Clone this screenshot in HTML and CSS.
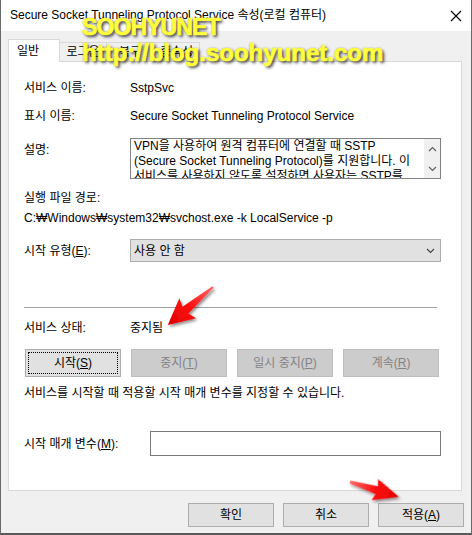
FILE: index.html
```html
<!DOCTYPE html>
<html lang="ko">
<head>
<meta charset="utf-8">
<link rel="stylesheet" href="styles.css">
</head>
<body>
<div class="window">
  <div class="titlebar">
    <span class="title">Secure Socket Tunneling Protocol Service 속성(로컬 컴퓨터)</span>
    <svg class="close" width="12" height="12" viewBox="0 0 12 12"><path d="M1 1 L11 11 M11 1 L1 11" stroke="#000" stroke-width="1.1" fill="none"/></svg>
  </div>
  <div class="client">
    <div class="tabs">
      <div class="tab active">일반</div>
      <div class="tab t2">로그온</div>
      <div class="tab t3">복구</div>
      <div class="tab t4">종속성</div>
    </div>
    <div class="panel">
      <div class="row r1"><span class="label">서비스 이름:</span><span>SstpSvc</span></div>
      <div class="row r2"><span class="label">표시 이름:</span><span>Secure Socket Tunneling Protocol Service</span></div>
      <div class="row r3">
        <span class="label desc-label">설명:</span>
        <div class="textarea">
          <div class="ta-text">VPN을 사용하여 원격 컴퓨터에 연결할 때 SSTP<br>(Secure Socket Tunneling Protocol)를 지원합니다. 이<br>서비스를 사용하지 않도록 설정하면 사용자는 SSTP를</div>
          <div class="scroll">
            <svg width="9" height="6" viewBox="0 0 9 6"><path d="M1 5 L4.5 1.5 L8 5" stroke="#606060" stroke-width="1.2" fill="none"/></svg>
            <svg width="9" height="6" viewBox="0 0 9 6"><path d="M1 1 L4.5 4.5 L8 1" stroke="#606060" stroke-width="1.2" fill="none"/></svg>
          </div>
        </div>
      </div>
      <div class="line r4">실행 파일 경로:</div>
      <div class="line r5">C:₩Windows₩system32₩svchost.exe -k LocalService -p</div>
      <div class="row r6">
        <span class="label">시작 유형(<u>E</u>):</span>
        <div class="select"><span>사용 안 함</span>
          <svg width="9" height="6" viewBox="0 0 9 6"><path d="M1 1 L4.5 4.5 L8 1" stroke="#404040" stroke-width="1.1" fill="none"/></svg>
        </div>
      </div>
      <div class="sep"></div>
      <div class="row r7"><span class="label">서비스 상태:</span><span>중지됨</span></div>
      <div class="btnrow">
        <div class="btn focus"><span class="focusring">시작(<u>S</u>)</span></div>
        <div class="btn disabled">중지(<u>T</u>)</div>
        <div class="btn disabled">일시 중지(<u>P</u>)</div>
        <div class="btn disabled">계속(<u>R</u>)</div>
      </div>
      <div class="line r8">서비스를 시작할 때 적용할 시작 매개 변수를 지정할 수 있습니다.</div>
      <div class="row r9">
        <span class="label wide">시작 매개 변수(<u>M</u>):</span>
        <div class="input"></div>
      </div>
    </div>
    <div class="footer">
      <div class="btn fbtn">확인</div>
      <div class="btn fbtn">취소</div>
      <div class="btn fbtn">적용(<u>A</u>)</div>
    </div>
  </div>

  <div class="watermark">
    <div class="wm1">SOOHYUNET</div>
    <div class="wm2">http://blog.soohyunet.com</div>
  </div>

  <svg class="arrows" width="472" height="535" viewBox="0 0 472 535">
    <defs>
      <linearGradient id="rg" x1="0" y1="0" x2="1" y2="0">
        <stop offset="0" stop-color="#ff6a6a"/>
        <stop offset="0.5" stop-color="#ff1010"/>
        <stop offset="1" stop-color="#e00000"/>
      </linearGradient>
      <filter id="sh" x="-30%" y="-30%" width="160%" height="160%">
        <feDropShadow dx="1.5" dy="2" stdDeviation="1.5" flood-color="#000" flood-opacity="0.45"/>
      </filter>
    </defs>
    <g filter="url(#sh)">
      <polygon transform="translate(213,287) rotate(140)" points="0,-1 36,-4.5 33,-13 59,0 33,13 36,4.5 0,1" fill="url(#rg)"/>
      <polygon transform="translate(350,482) rotate(17)" points="0,-1.5 28,-4 26,-11 51,0 26,11 28,4 0,1.5" fill="url(#rg)"/>
    </g>
  </svg>
</div>
</body>
</html>
```

FILE: styles.css
```css
* { box-sizing: border-box; }
html, body { margin: 0; padding: 0; }
body {
  background: #5b5f5a;
  font-family: "Liberation Sans", "Noto Sans CJK KR", sans-serif;
  font-size: 12px;
  color: #000;
}
u { text-decoration: underline; text-underline-offset: 1px; }

.window {
  position: relative;
  width: 472px;
  height: 535px;
  border-left: 1px solid #6a6a6a;
  border-right: 1px solid #6a6a6a;
  border-bottom: 2px solid #5a5a5a;
  background: #f0f0f0;
  display: flex;
  flex-direction: column;
  overflow: hidden;
}

.titlebar {
  height: 31px;
  background: #fff;
  display: flex;
  align-items: center;
  justify-content: space-between;
  padding: 0 9px 0 9px;
}
.title { font-size: 12px; line-height: 16px; padding-bottom: 1px; }

.client {
  flex: 1;
  padding: 8px 9px 0 7px;
  display: flex;
  flex-direction: column;
}

.tabs {
  display: flex;
  align-items: flex-end;
  height: 22px;
  position: relative;
  z-index: 1;
}
.tab {
  height: 19px;
  border: 1px solid #d9d9d9;
  border-bottom: none;
  background: #f0f0f0;
  line-height: 18px;
  text-align: center;
  margin-left: -1px;
}
.tab.active {
  height: 23px;
  margin-bottom: -1px;
  background: #fff;
  width: 52px;
  margin-left: 0;
  text-align: left;
  padding-left: 8px;
  line-height: 22px;
}
.t2 { width: 48px; }
.t3 { width: 48px; }
.t4 { width: 47px; }

.panel {
  height: 430px;
  background: #fff;
  border: 1px solid #d9d9d9;
  padding: 18px 20px 0 15px;
}

.row { display: flex; align-items: center; line-height: 16px; }
.label { width: 106px; flex: none; }
.label.wide { width: 126px; }
.line { line-height: 16px; }

.r2 { margin-top: 12px; }
.r3 { margin-top: 14px; align-items: flex-start; }
.desc-label { margin-top: 4px; }
.textarea {
  width: 311px;
  height: 41px;
  border: 1px solid #828282;
  display: flex;
  overflow: hidden;
}
.ta-text {
  flex: 1;
  padding: 0 0 0 3px;
  line-height: 15px;
  white-space: nowrap;
  overflow: hidden;
}
.scroll {
  width: 16px;
  flex: none;
  background: #f0f0f0;
  display: flex;
  flex-direction: column;
  justify-content: space-between;
  align-items: center;
  padding: 7px 0 6px;
}

.r4 { margin-top: 11px; }
.r5 { margin-top: 4px; }
.r6 { margin-top: 13px; }
.select {
  width: 312px;
  height: 23px;
  background: #e1e1e1;
  border: 1px solid #adadad;
  display: flex;
  align-items: center;
  justify-content: space-between;
  padding: 0 5px 0 3px;
}

.sep {
  margin-top: 45px;
  margin-right: 4px;
  height: 1px;
  background: #a0a0a0;
}
.r7 { margin-top: 12px; }

.btnrow {
  margin-top: 13px;
  display: flex;
  gap: 10px;
  padding-left: 1px;
}
.btn {
  width: 96px;
  height: 28px;
  border: 1px solid #adadad;
  background: #e1e1e1;
  display: flex;
  align-items: center;
  justify-content: center;
  line-height: 16px;
}
.btn.disabled {
  background: #cccccc;
  border-color: #bfbfbf;
  color: #838383;
}
.btn.focus { padding: 2px; }
.focusring {
  width: 100%;
  height: 100%;
  border: 1px dotted #000;
  display: flex;
  align-items: center;
  justify-content: center;
}

.r8 { margin-top: 8px; }
.r9 { margin-top: 30px; }
.input {
  width: 291px;
  height: 25px;
  border: 1px solid #7a7a7a;
  background: #fff;
}

.footer {
  display: flex;
  justify-content: flex-end;
  gap: 9px;
  margin-top: 12px;
  margin-right: -2px;
}
.fbtn { width: 86px; height: 24px; }

.watermark {
  position: absolute;
  z-index: 5;
  left: 81px;
  top: 15px;
  font-family: "Liberation Sans", sans-serif;
  font-weight: bold;
  color: #ffff3c;
  -webkit-text-stroke: 0.7px #ffff3c;
  text-shadow: 2px 2px 3px rgba(0,0,0,0.75), 0 0 2px rgba(0,0,0,0.35);
  pointer-events: none;
}
.wm1 { font-size: 23px; line-height: 24px; letter-spacing: -0.9px; }
.wm2 { font-size: 24px; line-height: 28px; }

.arrows {
  position: absolute;
  z-index: 6;
  left: -1px;
  top: 0;
  pointer-events: none;
}
```
